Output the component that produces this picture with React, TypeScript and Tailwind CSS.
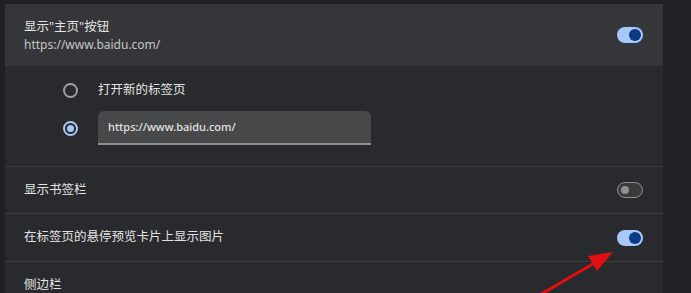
import React from "react";

function Toggle({ on }: { on: boolean }) {
  if (on) {
    return (
      <div className="w-[26px] h-[16px] rounded-full bg-[#a8c7fa] flex items-center justify-end pr-[2px]">
        <div className="w-[12px] h-[12px] rounded-full bg-[#0b3a82]" />
      </div>
    );
  }
  return (
    <div className="w-[26px] h-[16px] rounded-full border border-[#8e918f] bg-[#3a3b3d] flex items-center justify-start pl-[3px]">
      <div className="w-[8px] h-[8px] rounded-full bg-[#8e918f]" />
    </div>
  );
}

export default function App() {
  const font = { fontFamily: '"Noto Sans", "Noto Sans CJK SC", sans-serif' };
  return (
    <div className="w-[691px] h-[293px] overflow-hidden bg-[#202124] relative" style={font}>
      <div className="flex h-full pt-[4px]">
        <div className="w-[5px] shrink-0 bg-[#1f2023]" />
        <div className="w-[658px] shrink-0 bg-[#292a2d] flex flex-col">
          <div className="h-[62px] shrink-0 bg-[#353639] flex items-center justify-between pl-[19px] pr-[20px]">
            <div className="flex flex-col pt-[2px]">
              <span className="text-[12.5px] leading-[18px] text-[#e3e3e3]">显示"主页"按钮</span>
              <span className="text-[12px] leading-[18px] text-[#c4c7c5]">https://www.baidu.com/</span>
            </div>
            <Toggle on />
          </div>
          <div className="h-[100px] shrink-0 flex flex-col pl-[58px] pt-[14px]">
            <div className="flex items-center h-[20px]">
              <div className="w-[15px] h-[15px] rounded-full border-2 border-[#9aa0a6]" />
              <span className="ml-[20px] text-[12.5px] text-[#e3e3e3]">打开新的标签页</span>
            </div>
            <div className="flex items-center mt-[11px]">
              <div className="w-[15px] h-[15px] rounded-full border-2 border-[#a8c7fa] flex items-center justify-center">
                <div className="w-[7px] h-[7px] rounded-full bg-[#a8c7fa]" />
              </div>
              <div className="ml-[20px] w-[273px] h-[34px] rounded-t-[6px] bg-[#47484a] border-b-[2px] border-[#8e918f] flex items-center pl-[10px]">
                <span className="text-[11px] font-medium text-[#e3e3e3]">https://www.baidu.com/</span>
              </div>
            </div>
          </div>
          <div className="h-px shrink-0 bg-[#3c3d40]" />
          <div className="h-[46px] shrink-0 flex items-center justify-between pl-[19px] pr-[20px]">
            <span className="text-[12.5px] text-[#e3e3e3]">显示书签栏</span>
            <Toggle on={false} />
          </div>
          <div className="h-px shrink-0 bg-[#3c3d40]" />
          <div className="h-[47px] shrink-0 flex items-center justify-between pl-[19px] pr-[20px]">
            <span className="text-[12.5px] text-[#e3e3e3]">在标签页的悬停预览卡片上显示图片</span>
            <Toggle on />
          </div>
          <div className="h-px shrink-0 bg-[#3c3d40]" />
          <div className="h-[46px] shrink-0 flex items-center pl-[19px]">
            <span className="text-[12.5px] text-[#e3e3e3]">侧边栏</span>
          </div>
        </div>
      </div>
      <svg className="absolute left-0 top-0" width="691" height="293" viewBox="0 0 691 293">
        <line x1="538" y1="296" x2="596" y2="262" stroke="#e01010" strokeWidth="3" strokeLinecap="round" />
        <polygon points="613,252 588,256 597,271" fill="#e01010" />
      </svg>
    </div>
  );
}
